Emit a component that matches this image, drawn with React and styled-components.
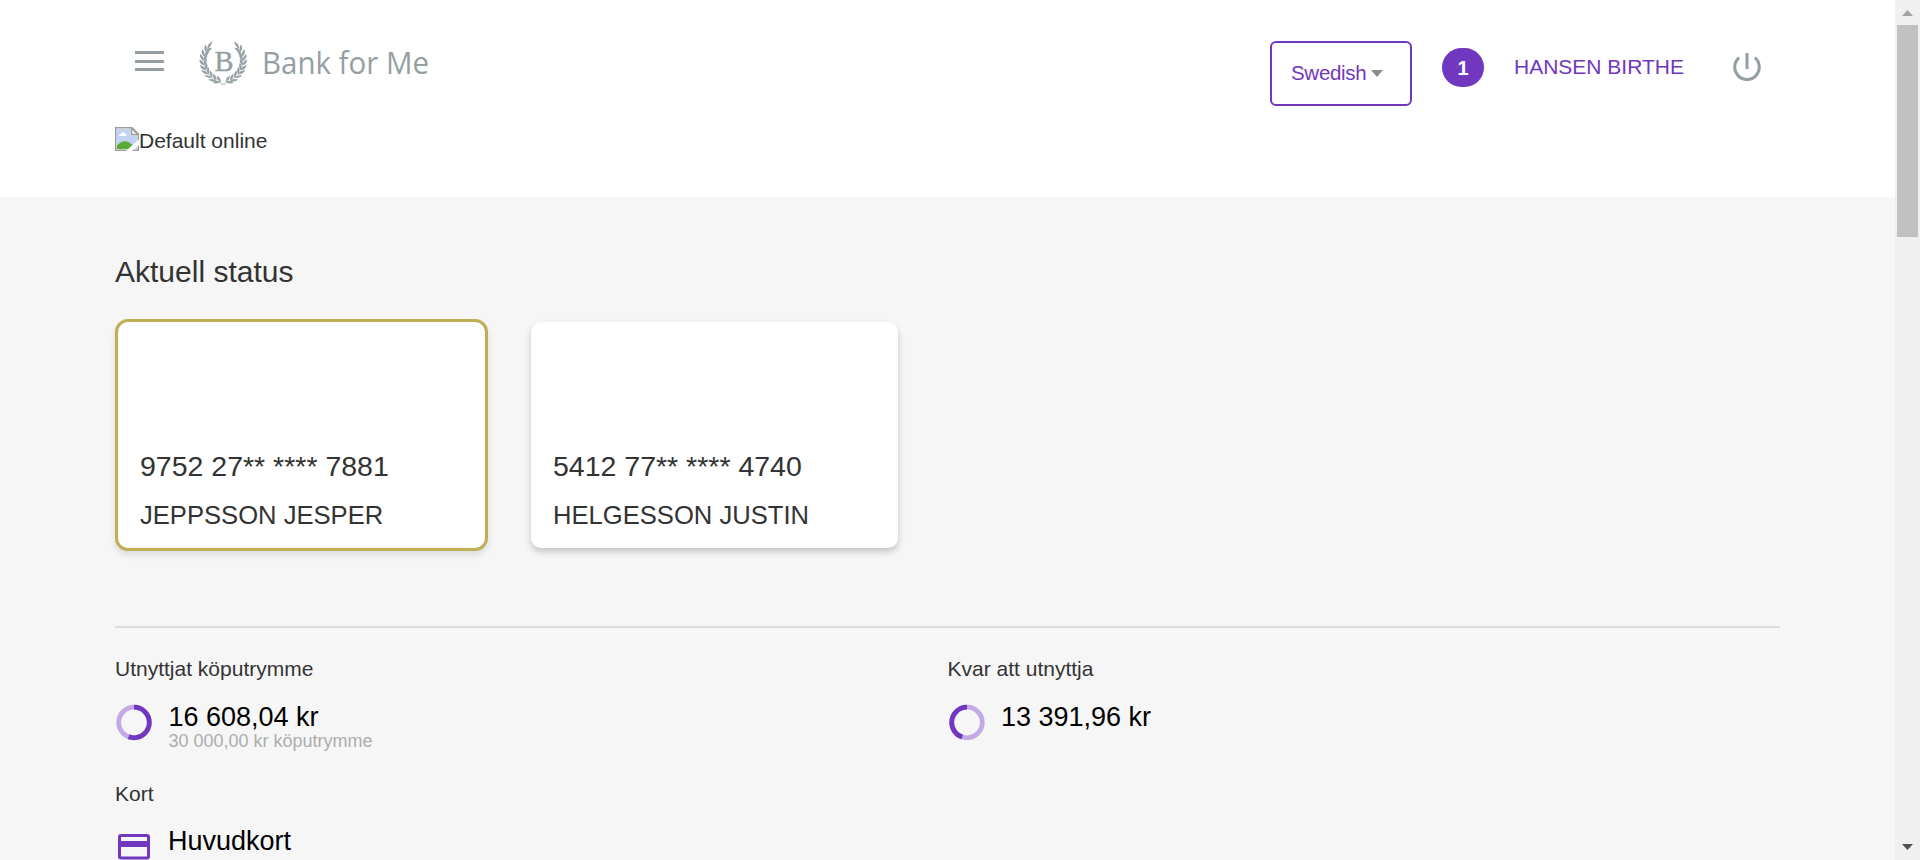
import React from "react";
import styled, { createGlobalStyle } from "styled-components";

const purple = "#7137be";
const lilac = "#c3a9e5";
const slate = "#949fa3";

const GlobalStyle = createGlobalStyle`
  * { box-sizing: border-box; }
  html, body { margin: 0; height: 100%; overflow: hidden; }
  body { font-family: "Liberation Sans", Arial, sans-serif; color: #333; background: #f6f6f6; }
  svg { display: block; flex: none; }
`;

const Window = styled.div`
  display: flex;
  height: 860px;
  overflow: hidden;
`;
const Page = styled.div`
  width: 1895px;
  height: 860px;
  overflow: hidden;
  background: #f6f6f6;
`;
const Header = styled.header`
  height: 197px;
  background: #fff;
  padding: 0 115px;
`;
const TopBar = styled.div`
  display: flex;
  align-items: flex-start;
  height: 127px;
`;
const MenuButton = styled.button`
  border: 0;
  padding: 0;
  background: none;
  margin: 51px 0 0 20px;
  width: 29px;
  height: 20px;
  display: flex;
  flex-direction: column;
  justify-content: space-between;
`;
const MenuLine = styled.span`
  width: 29px;
  height: 3px;
  background: ${slate};
`;
const Logo = styled.div`
  margin: 38px 0 0 33px;
`;
const Tools = styled.div`
  display: flex;
  align-items: flex-start;
  margin-left: auto;
  margin-right: 19px;
`;
const LanguageSelect = styled.div`
  display: flex;
  align-items: center;
  width: 142px;
  height: 65px;
  margin-top: 41px;
  padding: 0 0 2px 19px;
  border: 2px solid ${purple};
  border-radius: 6px;
  color: ${purple};
  font-size: 20.5px;
  letter-spacing: -0.3px;
`;
const Caret = styled.span`
  margin: 2px 0 0 5px;
  border: 6.5px solid transparent;
  border-top: 7px solid #8c8c8c;
  border-bottom: 0;
`;
const Badge = styled.span`
  width: 42px;
  height: 39px;
  margin: 48px 0 0 30px;
  border-radius: 20px;
  background: ${purple};
  color: #fff;
  font-size: 20px;
  font-weight: 700;
  line-height: 40px;
  text-align: center;
`;
const UserName = styled.span`
  width: 171px;
  margin: 55px 0 0 30px;
  color: ${purple};
  font-size: 21px;
  line-height: 24px;
  white-space: nowrap;
`;
const Power = styled.div`
  margin: 52px 0 0 48px;
`;
const MissingImage = styled.div`
  display: flex;
  align-items: flex-start;
  font-size: 21px;
  line-height: 28px;
  color: #333;
`;
const Main = styled.main`
  padding: 58px 115px 0;
`;
const Title = styled.h1`
  margin: 0;
  font-size: 30px;
  font-weight: 400;
  line-height: 34px;
`;
const Cards = styled.div`
  display: flex;
  align-items: center;
  gap: 43px;
  height: 232px;
  margin-top: 30px;
`;
const Card = styled.article`
  display: flex;
  flex-direction: column;
  justify-content: flex-end;
  width: ${(p) => (p.$selected ? 373 : 367)}px;
  height: ${(p) => (p.$selected ? 232 : 226)}px;
  padding: 0 22px 13px;
  background: #fff;
  border: ${(p) => (p.$selected ? "3px solid #c0ae56" : "0")};
  border-radius: ${(p) => (p.$selected ? 13 : 10)}px;
  box-shadow: ${(p) => (p.$selected ? "0 4px 6px rgba(0,0,0,.1)" : "0 4px 7px rgba(0,0,0,.2)")};
`;
const CardNumber = styled.div`
  margin-bottom: 5px;
  font-size: 28.5px;
  line-height: 48px;
`;
const CardHolder = styled.div`
  font-size: 25.6px;
  line-height: 40px;
`;
const Divider = styled.hr`
  height: 2px;
  margin: 75px 0 0;
  border: 0;
  background: #dcdcdc;
`;
const Details = styled.div`
  display: grid;
  grid-template-columns: 1fr 1fr;
  padding-top: 27px;
`;
const Detail = styled.section`
  height: 125px;
`;
const Label = styled.div`
  font-size: 21px;
  line-height: 28px;
`;
const ValueRow = styled.div`
  display: flex;
  margin-top: ${(p) => (p.$tight ? 18 : 19)}px;
`;
const IconBox = styled.div`
  width: ${(p) => (p.$wide ? 53.5 : 53)}px;
  padding-top: ${(p) => (p.$wide ? 2 : 3)}px;
`;
const Amount = styled.div`
  color: #000;
  font-size: 27px;
  line-height: 30px;
`;
const Note = styled.div`
  color: #adadad;
  font-size: 18px;
  line-height: 18px;
`;
const ScrollTrack = styled.div`
  display: flex;
  flex-direction: column;
  align-items: center;
  width: 25px;
  height: 860px;
  padding: 10px 0;
  background: #f0f0f0;
`;
const ScrollThumb = styled.div`
  width: 21px;
  height: 212px;
  margin: 9px 0 auto;
  background: #c1c1c1;
`;
const ScrollArrow = styled.div`
  width: 11px;
  height: 6px;
  clip-path: ${(p) => (p.$down ? "polygon(0 0, 100% 0, 50% 100%)" : "polygon(50% 0, 100% 100%, 0 100%)")};
  background: ${(p) => (p.$down ? "#505050" : "#a3a3a3")};
`;

const laurelStems = [
  [22.5, 43, 199], [18, 41.5, 206], [13.7, 38.8, 217], [10, 35.4, 229],
  [7.2, 31.2, 241], [5.5, 26.6, 253], [4.9, 22, 265], [5.5, 17.4, 277], [7.2, 13, 289],
];

function Leaf({ x, y, angle, length = 8.4 }) {
  return (
    <path
      transform={`translate(${x} ${y}) rotate(${angle})`}
      d={`M0 0 Q${length * 0.55} -2.7 ${length} 0 Q${length * 0.5} 2.3 0 0Z`}
    />
  );
}

function Branch() {
  return (
    <g fill={slate}>
      {laurelStems.map(([x, y, a], i) => (
        <g key={i}>
          <Leaf x={x} y={y} angle={a - 20} length={i > 3 ? 7.6 : 8.4} />
          <Leaf x={x} y={y} angle={a + 37} length={7.6} />
        </g>
      ))}
      <Leaf x={8.6} y={10} angle={304} length={9} />
      <path d="M27 46 Q8 40 5 25 Q4.6 16 10.5 8" fill="none" stroke={slate} strokeWidth=".5" />
    </g>
  );
}

function BankLogo() {
  return (
    <svg width="250" height="50" viewBox="0 0 250 50">
      <g transform="translate(1.5 1)">
        <Branch />
        <g transform="translate(49.5 0) scale(-1 1)"><Branch /></g>
      </g>
      <text x="17.5" y="33" fontFamily="Liberation Serif, serif" fontSize="28.5" fill={slate} stroke={slate} strokeWidth=".4">B</text>
      <text x="65" y="36" fontFamily="Open Sans, Noto Sans, sans-serif" fontSize="31" textLength="167" lengthAdjust="spacingAndGlyphs" fill={slate}>Bank for Me</text>
    </svg>
  );
}

function PowerIcon() {
  return (
    <svg width="28" height="30" viewBox="0 0 28 30" fill="none" stroke={slate} strokeWidth="3">
      <path d="M14 1v16M6.2 5.7A12.3 12.3 0 1 0 21.8 5.7" />
    </svg>
  );
}

function BrokenImageIcon() {
  return (
    <svg width="24" height="24" viewBox="0 0 24 24">
      <path d="M.75.75H17L23.25 7v16.25H.75Z" fill="#fff" stroke="#9c9c9c" strokeWidth="1.5" />
      <path d="M2 2h13.5v6.5H22V22H2Z" fill="#c3d3f5" />
      <path d="M4 9q0-2 2-2 1-3 3.5-1 2 .5 2 3Z" fill="#fff" />
      <path d="M2 22v-3.5q8-8.5 16 0V22Z" fill="#5aac38" />
      <path d="M16.5 1v6.5H23Z" fill="#fff" stroke="#9c9c9c" strokeWidth="1.5" />
      <path d="M24 12.5 11 24h6l7-6Z" fill="#fff" />
    </svg>
  );
}

function Ring({ share, reverse }) {
  const length = 2 * Math.PI * 15.3;
  return (
    <svg width="38" height="38" viewBox="0 0 38 38" fill="none" strokeWidth="4.8">
      <circle cx="19" cy="18.5" r="15.3" stroke={lilac} />
      <g transform={reverse ? "translate(38 0) scale(-1 1)" : undefined}>
        <circle cx="19" cy="18.5" r="15.3" stroke={purple} strokeDasharray={`${length * share} ${length}`} transform="rotate(-90 19 18.5)" />
      </g>
    </svg>
  );
}

function CardIcon() {
  return (
    <svg width="38" height="34" viewBox="0 0 38 34">
      <rect x="4.5" y="6.5" width="29" height="22.5" rx="1.5" fill="none" stroke={purple} strokeWidth="3" />
      <path d="M4 12h30v6H4Z" fill={purple} />
    </svg>
  );
}

export default function App() {
  return (
    <Window>
      <GlobalStyle />
      <Page>
        <Header>
          <TopBar>
            <MenuButton aria-label="Meny"><MenuLine /><MenuLine /><MenuLine /></MenuButton>
            <Logo><BankLogo /></Logo>
            <Tools>
              <LanguageSelect>Swedish<Caret /></LanguageSelect>
              <Badge>1</Badge>
              <UserName>HANSEN BIRTHE</UserName>
              <Power><PowerIcon /></Power>
            </Tools>
          </TopBar>
          <MissingImage><BrokenImageIcon />Default online</MissingImage>
        </Header>
        <Main>
          <Title>Aktuell status</Title>
          <Cards>
            <Card $selected>
              <CardNumber>9752 27** **** 7881</CardNumber>
              <CardHolder>JEPPSSON JESPER</CardHolder>
            </Card>
            <Card>
              <CardNumber>5412 77** **** 4740</CardNumber>
              <CardHolder>HELGESSON JUSTIN</CardHolder>
            </Card>
          </Cards>
          <Divider />
          <Details>
            <Detail>
              <Label>Utnyttjat köputrymme</Label>
              <ValueRow>
                <IconBox $wide><Ring share={0.5536} /></IconBox>
                <div><Amount>16 608,04 kr</Amount><Note>30 000,00 kr köputrymme</Note></div>
              </ValueRow>
            </Detail>
            <Detail>
              <Label>Kvar att utnyttja</Label>
              <ValueRow>
                <IconBox $wide><Ring share={0.4464} reverse /></IconBox>
                <Amount>13 391,96 kr</Amount>
              </ValueRow>
            </Detail>
            <Detail>
              <Label>Kort</Label>
              <ValueRow $tight>
                <IconBox><CardIcon /></IconBox>
                <Amount>Huvudkort</Amount>
              </ValueRow>
            </Detail>
          </Details>
        </Main>
      </Page>
      <ScrollTrack>
        <ScrollArrow />
        <ScrollThumb />
        <ScrollArrow $down />
      </ScrollTrack>
    </Window>
  );
}
